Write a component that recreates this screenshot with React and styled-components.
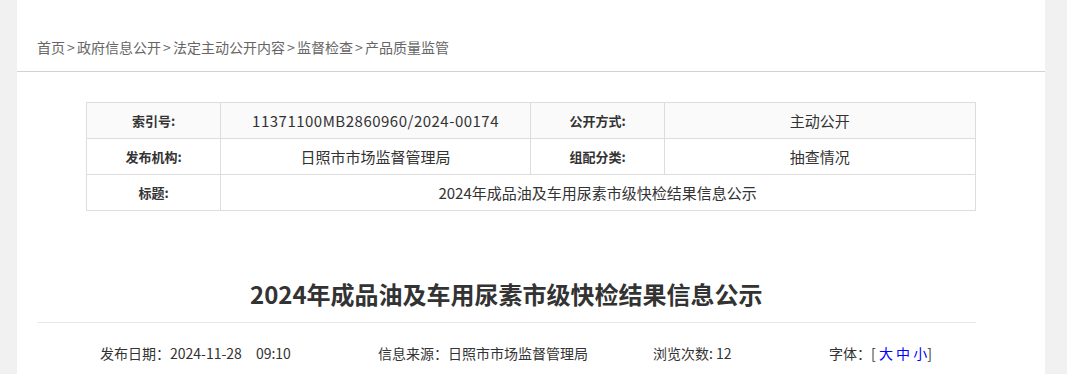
import styled, { createGlobalStyle } from 'styled-components';

const GlobalStyle = createGlobalStyle`
  html, body {
    margin: 0;
    padding: 0;
    background: #f1f1f1;
    font-family: "Noto Sans CJK SC", "Noto Sans", sans-serif;
    color: #333;
  }
`;

const crumbs = ['首页', '政府信息公开', '法定主动公开内容', '监督检查', '产品质量监管'];

function App() {
  return (
    <>
      <GlobalStyle />
      <Page>
        <Breadcrumb>
          {crumbs.map((c, i) => (
            <span key={c}>
              {i > 0 && <Sep>&gt;</Sep>}
              <Crumb href="#">{c}</Crumb>
            </span>
          ))}
        </Breadcrumb>
        <Content>
          <InfoTable>
            <colgroup>
              <col style={{ width: '15%' }} />
              <col style={{ width: '35%' }} />
              <col style={{ width: '15%' }} />
              <col style={{ width: '35%' }} />
            </colgroup>
            <tbody>
              <Row $shade>
                <Label>索引号:</Label>
                <Value $code>11371100MB2860960/2024-00174</Value>
                <Label>公开方式:</Label>
                <Value>主动公开</Value>
              </Row>
              <Row>
                <Label>发布机构:</Label>
                <Value>日照市市场监督管理局</Value>
                <Label>组配分类:</Label>
                <Value>抽查情况</Value>
              </Row>
              <Row>
                <Label>标题:</Label>
                <Value colSpan={3}>2024年成品油及车用尿素市级快检结果信息公示</Value>
              </Row>
            </tbody>
          </InfoTable>
          <Title>2024年成品油及车用尿素市级快检结果信息公示</Title>
          <Meta>
            <MetaItem $w={278}>发布日期：2024-11-28<Gap />09:10</MetaItem>
            <MetaItem $w={275}>信息来源：日照市市场监督管理局</MetaItem>
            <MetaItem $w={176}>浏览次数: 12</MetaItem>
            <MetaItem>
              字体：[ <SizeLink href="#">大</SizeLink> <SizeLink href="#">中</SizeLink> <SizeLink href="#">小</SizeLink>]
            </MetaItem>
          </Meta>
        </Content>
      </Page>
    </>
  );
}

export default App;

const Page = styled.div`
  margin-left: 17px;
  width: 1028px;
  min-height: 374px;
  background: #fff;
`;

const Breadcrumb = styled.div`
  padding: 37px 20px 14px;
  line-height: 20px;
  font-size: 14px;
  border-bottom: 1px solid #d2d2d2;
  color: #666;
`;

const Crumb = styled.a`
  color: #666;
  text-decoration: none;
`;

const Sep = styled.span`
  display: inline-block;
  width: 12px;
  text-align: center;
  color: #666;
`;

const Content = styled.div`
  padding: 30px 20px 0;
`;

const InfoTable = styled.table`
  width: 90%;
  margin: 0 auto;
  table-layout: fixed;
  border-collapse: collapse;
  font-size: 15px;
`;

const Row = styled.tr`
  background: ${p => (p.$shade ? '#fafafa' : '#fff')};
`;

const Cell = styled.td`
  height: 35px;
  padding: 0;
  border: 1px solid #dddddd;
  text-align: center;
  line-height: 20px;
`;

const Label = styled(Cell)`
  font-size: 13px;
  font-weight: bold;
  color: #333;
`;

const Value = styled(Cell)`
  color: #333;
  letter-spacing: ${p => (p.$code ? '0.5px' : 'normal')};
`;

const Title = styled.h1`
  width: 95%;
  margin: 67px 0 0;
  padding-bottom: 13px;
  border-bottom: 1px solid #e8e8e8;
  text-align: center;
  font-size: 24px;
  line-height: 31px;
  font-weight: bold;
  color: #333;
`;

const Meta = styled.div`
  display: flex;
  margin: 20px 0 0 63px;
  font-size: 14px;
  line-height: 20px;
  color: #333;
`;

const MetaItem = styled.div`
  flex: 0 0 ${p => (p.$w ? `${p.$w}px` : 'auto')};
  white-space: nowrap;
`;

const Gap = styled.span`
  display: inline-block;
  width: 14px;
`;

const SizeLink = styled.a`
  color: #0000ff;
  text-decoration: none;
`;
